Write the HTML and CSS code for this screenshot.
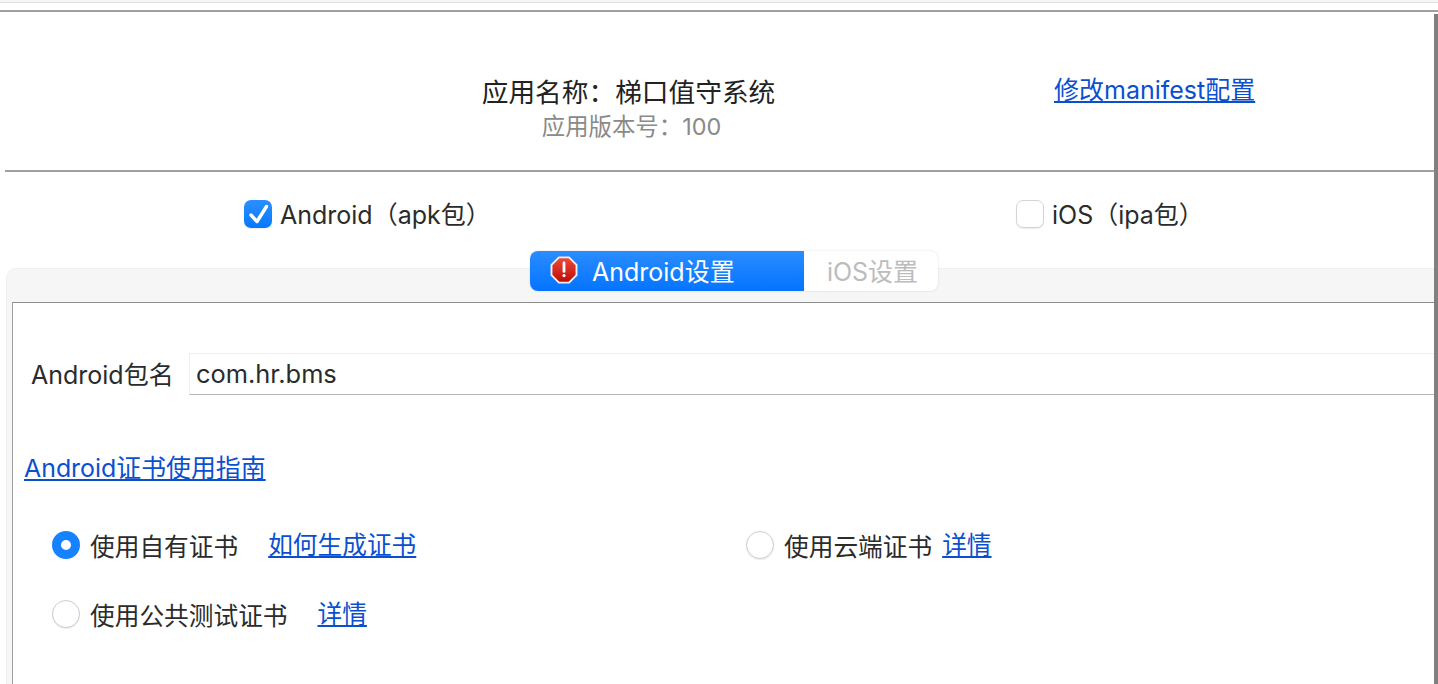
FILE: index.html
```html
<!DOCTYPE html>
<html lang="zh-CN">
<head>
  <meta charset="UTF-8">
  <title>应用发行</title>
  <link rel="stylesheet" href="styles.css">
</head>
<body>
  <div class="top-strip"></div>
  <div class="scrollbar"></div>
  <div class="dialog">
    <div class="app-head">
      <div class="app-info">
        <div class="app-name">应用名称：梯口值守系统</div>
        <div class="app-version">应用版本号：100</div>
      </div>
      <a class="manifest-link" href="#">修改manifest配置</a>
    </div>

    <div class="platforms">
      <label class="platform platform-android">
        <span class="check check-on">
          <svg width="28" height="28" viewBox="0 0 28 28"><path d="M7 15l6 6.500L22.500 6.500" fill="none" stroke="#fff" stroke-width="3.400" stroke-linecap="round" stroke-linejoin="round"/></svg>
        </span>
        Android（apk包）
      </label>
      <label class="platform platform-ios">
        <span class="check"></span>
        iOS（ipa包）
      </label>
    </div>

    <div class="tab-box">
      <div class="tabs">
        <div class="tab tab-active">
          <svg class="warn-icon" width="28" height="28" viewBox="0 0 30 30">
            <defs>
              <linearGradient id="warnFill" x1="0" y1="0" x2="0" y2="1">
                <stop offset="0" stop-color="#ee4b3e"/>
                <stop offset="1" stop-color="#bd0a05"/>
              </linearGradient>
            </defs>
            <path d="M9.600 1.500h10.800l8 8v11l-8 8H9.600l-8-8v-11z" fill="url(#warnFill)" stroke="#f4f1f1" stroke-width="2" stroke-linejoin="round"/>
            <path d="M15 7.500v9" stroke="#fff" stroke-width="3" stroke-linecap="round"/>
            <circle cx="15" cy="21" r="1.700" fill="#fff"/>
          </svg>
          Android设置
        </div>
        <div class="tab tab-idle">iOS设置</div>
      </div>

      <div class="tab-body">
        <div class="package-row">
          <span class="package-label">Android包名</span>
          <div class="package-input">com.hr.bms</div>
        </div>

        <a class="guide-link" href="#">Android证书使用指南</a>

        <div class="cert-row">
          <div class="cert-own">
            <span class="radio radio-on"></span>
            <span class="cert-text">使用自有证书</span>
            <a class="cert-link" href="#">如何生成证书</a>
          </div>
          <div class="cert-cloud">
            <span class="radio"></span>
            <span class="cert-text">使用云端证书</span>
            <a class="cert-link cert-link-near" href="#">详情</a>
          </div>
        </div>
        <div class="cert-row cert-row-second">
          <div class="cert-own">
            <span class="radio"></span>
            <span class="cert-text">使用公共测试证书</span>
            <a class="cert-link" href="#">详情</a>
          </div>
        </div>
      </div>
    </div>
  </div>
</body>
</html>
```

FILE: styles.css
```css
body {
  margin: 0;
  height: 684px;
  overflow: hidden;
  background: #fff;
  color: #2b2b2b;
  font-family: "Inter", "Noto Sans CJK SC", sans-serif;
  font-size: 25px;
}
a {
  color: #0b4fd0;
  text-decoration: underline;
}
.top-strip {
  height: 2px;
  border-bottom: 1px solid #dedede;
  background: #f6f6f6;
}
.scrollbar {
  position: absolute;
  top: 14px;
  right: 0;
  bottom: 0;
  width: 4px;
  background: #808080;
  z-index: 2;
}
.dialog {
  margin-top: 7px;
  border-top: 2px solid #a0a0a0;
  height: 672px;
}
.app-head {
  display: flex;
  height: 160px;
  box-sizing: border-box;
  margin-left: 5px;
  border-bottom: 2px solid #a0a0a0;
}
.app-info {
  width: 1049px;
  padding: 63px 0 0 198px;
  text-align: center;
  box-sizing: border-box;
}
.app-name {
  font-size: 26.700px;
  line-height: 34px;
  color: #222;
}
.app-version {
  font-size: 23.400px;
  line-height: 34px;
  margin-top: 1px;
  padding-left: 6px;
  color: #8a8a8a;
}
.manifest-link {
  margin-top: 61px;
  height: 34px;
  line-height: 34px;
}
.platforms {
  display: flex;
  height: 77px;
  padding-top: 26px;
  box-sizing: border-box;
}
.platform {
  display: flex;
  align-items: center;
  height: 30px;
}
.platform-android {
  margin-left: 244px;
  width: 772px;
}
.check {
  width: 28px;
  height: 28px;
  box-sizing: border-box;
  margin: 2px 8px 0 0;
  border-radius: 7px;
  border: 1px solid #d4d4d4;
  background: #fff;
  box-shadow: 0 1px 1px rgba(0,0,0,0.08);
}
.check-on {
  border: none;
  background: linear-gradient(#2b8fff, #0678ff);
}
.tab-box {
  margin-left: 6px;
  margin-top: 19px;
  height: 416px;
  background: #f6f6f6;
  border: 1px solid #efefef;
  border-right: none;
  border-bottom: none;
  border-radius: 10px 0 0 0;
  padding-left: 5px;
  position: relative;
}
.tabs {
  position: absolute;
  left: 523px;
  top: -18px;
  display: flex;
  height: 40px;
  border-radius: 8px;
  background: #fff;
  box-shadow: 0 0 2px rgba(0,0,0,0.16);
}
.tab {
  display: flex;
  align-items: center;
  justify-content: center;
  width: 134px;
  padding-bottom: 2px;
  box-sizing: border-box;
  color: #bcbcbc;
}
.tab-idle {
  padding-left: 3px;
}
.tab-active {
  width: 274px;
  justify-content: flex-start;
  padding-left: 20px;
  color: #fff;
  background: linear-gradient(#2a8cff, #0474ff);
  border-radius: 8px 0 0 8px;
}
.warn-icon {
  margin-right: 14px;
}
.tab-body {
  margin-top: 33px;
  height: 400px;
  background: #fff;
  border-top: 1px solid #8c8c8c;
  border-left: 1px solid #a0a0a0;
  box-sizing: border-box;
  padding-top: 50px;
}
.package-row {
  display: flex;
  align-items: center;
  padding-left: 18px;
}
.package-label {
  width: 158px;
  margin-bottom: 2px;
}
.package-input {
  flex: 1;
  height: 42px;
  line-height: 40px;
  box-sizing: border-box;
  padding-left: 6px;
  font-size: 25.400px;
  border: 1px solid #efefef;
  border-bottom: 1px solid #b5b5b5;
  border-right: none;
}
.guide-link {
  display: block;
  width: max-content;
  margin: 56px 0 0 11px;
  line-height: 34px;
  font-size: 24.900px;
}
.cert-row {
  display: flex;
  margin-top: 43px;
  height: 34px;
  padding-left: 39px;
  font-size: 24.700px;
}
.cert-row-second {
  margin-top: 35px;
}
.cert-own {
  display: flex;
  align-items: center;
  width: 694px;
}
.cert-cloud {
  display: flex;
  align-items: center;
}
.radio {
  width: 28px;
  height: 28px;
  box-sizing: border-box;
  margin-right: 10px;
  border-radius: 50%;
  border: 1px solid #cdcdcd;
  background: #fff;
  box-shadow: 0 1px 1px rgba(0,0,0,0.08);
}
.radio-on {
  border: 9px solid #1583ff;
  box-shadow: none;
}
.cert-link {
  margin-left: 30px;
  margin-bottom: 4px;
}
.cert-link-near {
  margin-left: 10px;
}
```
